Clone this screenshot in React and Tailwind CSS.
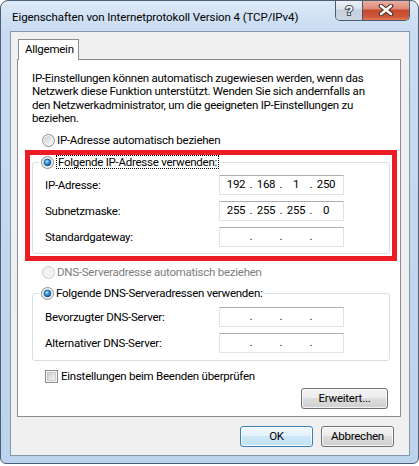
import React, { Fragment } from "react";

function Radio({ checked, disabled }) {
  return (
    <svg width="13" height="13" viewBox="0 0 13 13" className="shrink-0">
      <defs>
        <linearGradient id="radioIn" x1="0" y1="0" x2="1" y2="1">
          <stop offset="0" stopColor="#cfcfcf" />
          <stop offset="1" stopColor="#fbfbfb" />
        </linearGradient>
        <radialGradient id="radioDot" cx="0.4" cy="0.35" r="0.75">
          <stop offset="0" stopColor="#a6ecff" />
          <stop offset="0.45" stopColor="#2d8fd8" />
          <stop offset="1" stopColor="#0b4a86" />
        </radialGradient>
      </defs>
      <circle cx="6.5" cy="6.5" r="6" fill="#f4f4f4" stroke={disabled ? "#c9c9c9" : "#8c8c8c"} />
      <circle cx="6.5" cy="6.5" r="4.6" fill={disabled ? "#f2f2f2" : "url(#radioIn)"} />
      {checked && <circle cx="6.5" cy="6.5" r="3.4" fill="url(#radioDot)" stroke="#1b4f7f" strokeWidth="0.7" />}
    </svg>
  );
}

function Checkbox() {
  return (
    <svg width="13" height="13" viewBox="0 0 13 13" className="shrink-0">
      <defs>
        <linearGradient id="cbIn" x1="0" y1="0" x2="1" y2="1">
          <stop offset="0" stopColor="#cbcbcb" />
          <stop offset="1" stopColor="#f6f6f6" />
        </linearGradient>
      </defs>
      <rect x="0.5" y="0.5" width="12" height="12" fill="#f4f4f4" stroke="#8c8c8c" />
      <rect x="2.5" y="2.5" width="8" height="8" fill="url(#cbIn)" stroke="#b6b6b6" strokeWidth="0.6" />
    </svg>
  );
}

function IpField({ parts = ["", "", "", ""] }) {
  return (
    <div className="flex h-[20px] w-[125px] items-center border border-[#e2e3ea] border-t-[#abadb3] bg-white pl-[3px] leading-none">
      {parts.map((p, i) => (
        <Fragment key={i}>
          <span className="w-[26px] text-center">{p}</span>
          {i < 3 && <span className="w-[4px] text-center">.</span>}
        </Fragment>
      ))}
    </div>
  );
}

function FieldRow({ label, parts }) {
  return (
    <div className="flex h-[20px] items-center">
      <span className="w-[174px]">{label}</span>
      <IpField parts={parts} />
    </div>
  );
}

function Button({ children, primary, className }) {
  return (
    <div
      className={`flex h-[21px] items-center justify-center rounded-[3px] border shadow-[inset_0_0_0_1px_rgba(255,255,255,0.75)] ${
        primary
          ? "border-[#3c7fb1] bg-[linear-gradient(#f0f8fd_0%,#e0f1fb_50%,#cde8f8_50%,#c0e1f5_100%)]"
          : "border-[#707070] bg-[linear-gradient(#f2f2f2_0%,#ebebeb_50%,#dddddd_50%,#cfcfcf_100%)]"
      } ${className}`}
    >
      {children}
    </div>
  );
}

export default function App() {
  return (
    <div className="h-[466px] w-[419px] bg-white font-['Roboto',sans-serif] text-[11.5px] tracking-[-0.25px] text-black">
      <div className="flex h-[464px] w-[419px] flex-col overflow-hidden rounded-t-[8px] rounded-b-[6px] border border-[#4f5e72] bg-[linear-gradient(180deg,#dde9f7_0px,#c9dcf1_28px,#bcd3ed_100%)] pl-[9px] pr-[8px] pb-[7px]">
        {/* title bar */}
        <div className="flex h-[30px] shrink-0 items-start">
          <span className="ml-[2px] whitespace-nowrap pt-[9px] leading-[14px] tracking-[-0.1px]">Eigenschaften von Internetprotokoll Version 4 (TCP/IPv4)</span>
          <div className="-mt-[1px] ml-auto flex h-[21px] overflow-hidden rounded-b-[5px] border border-t-0 border-[#4a5a70]">
            <div className="flex w-[27px] items-center justify-center border-r border-[#4a5a70] bg-[linear-gradient(#eef2f7_0%,#d8e1eb_45%,#c4cfdc_50%,#cbd6e2_100%)]">
              <svg width="12" height="14" viewBox="0 0 12 14">
                <text x="6" y="12" textAnchor="middle" fontSize="13" fontWeight="700" fontFamily="Liberation Sans, sans-serif" fill="#ffffff" stroke="#3f4d60" strokeWidth="2" paintOrder="stroke">?</text>
              </svg>
            </div>
            <div className="flex w-[46px] items-center justify-center bg-[linear-gradient(#eab3a6_0%,#dc8b77_45%,#c8472c_50%,#d0593b_85%,#e27c55_100%)]">
              <svg width="16" height="12" viewBox="0 0 16 12">
                <path d="M3 2 L13 10 M13 2 L3 10" stroke="#4a2a24" strokeWidth="4.6" strokeLinecap="round" />
                <path d="M3 2 L13 10 M13 2 L3 10" stroke="#ffffff" strokeWidth="2.6" strokeLinecap="round" />
              </svg>
            </div>
          </div>
        </div>

        {/* client area */}
        <div className="flex flex-1 flex-col border border-[#8397b0] bg-[#f0f0f0] pl-[6px] pr-[8px] pt-[7px] pb-[8px]">
          <div className="flex">
            <div className="relative z-10 -mb-[1px] ml-[1px] flex h-[21px] w-[61px] items-center border border-b-0 border-[#898c95] bg-white pl-[6px]">
              Allgemein
            </div>
          </div>

          <div className="flex h-[358px] flex-col border border-[#898c95] bg-white pt-[12px]">
            <p className="ml-[14px] whitespace-nowrap leading-[13.3px]">
              IP-Einstellungen können automatisch zugewiesen werden, wenn das
              <br />
              Netzwerk diese Funktion unterstützt. Wenden Sie sich andernfalls an
              <br />
              den Netzwerkadministrator, um die geeigneten IP-Einstellungen zu
              <br />
              beziehen.
            </p>

            <div className="ml-[24px] mt-[8px] flex h-[14px] items-center gap-[2px]">
              <Radio />
              <span>IP-Adresse automatisch beziehen</span>
            </div>

            <div className="ml-[7px] mt-[3px] w-[372px] border-[5px] border-[#ed1c24] pb-[2px] pl-[2px]">
              <fieldset className="w-[358px] rounded-[3px] border border-[#d5dfe5] pl-[12px] pb-[6px]">
                <legend className="-ml-[6px] flex h-[14px] items-center gap-[2px] px-[2px]">
                  <Radio checked />
                  <span className="border border-dotted border-black px-[1px] leading-[12px]">Folgende IP-Adresse verwenden:</span>
                </legend>
                <div className="mt-[6px] flex flex-col gap-[6px]">
                  <FieldRow label="IP-Adresse:" parts={["192", "168", "1", "250"]} />
                  <FieldRow label="Subnetzmaske:" parts={["255", "255", "255", "0"]} />
                  <FieldRow label="Standardgateway:" />
                </div>
              </fieldset>
            </div>

            <div className="ml-[24px] mt-[4px] flex h-[14px] items-center gap-[2px] text-[#7d7d7d]">
              <Radio disabled />
              <span>DNS-Serveradresse automatisch beziehen</span>
            </div>

            <fieldset className="ml-[14px] mt-[7px] w-[358px] rounded-[3px] border border-[#d5dfe5] pl-[12px] pb-[7px]">
              <legend className="-ml-[6px] flex h-[14px] items-center gap-[2px] px-[2px]">
                <Radio checked />
                <span>Folgende DNS-Serveradressen verwenden:</span>
              </legend>
              <div className="mt-[7px] flex flex-col gap-[6px]">
                <FieldRow label="Bevorzugter DNS-Server:" />
                <FieldRow label="Alternativer DNS-Server:" />
              </div>
            </fieldset>

            <div className="ml-[27px] mt-[8px] flex h-[14px] items-center gap-[3px]">
              <Checkbox />
              <span>Einstellungen beim Beenden überprüfen</span>
            </div>

            <div className="mt-[5px] flex justify-end pr-[12px]">
              <Button className="w-[87px]">Erweitert...</Button>
            </div>
          </div>

          <div className="mt-[9px] flex justify-end gap-[8px] pr-[7px]">
            <Button primary className="w-[73px]">OK</Button>
            <Button className="w-[73px]">Abbrechen</Button>
          </div>
        </div>
      </div>
    </div>
  );
}
